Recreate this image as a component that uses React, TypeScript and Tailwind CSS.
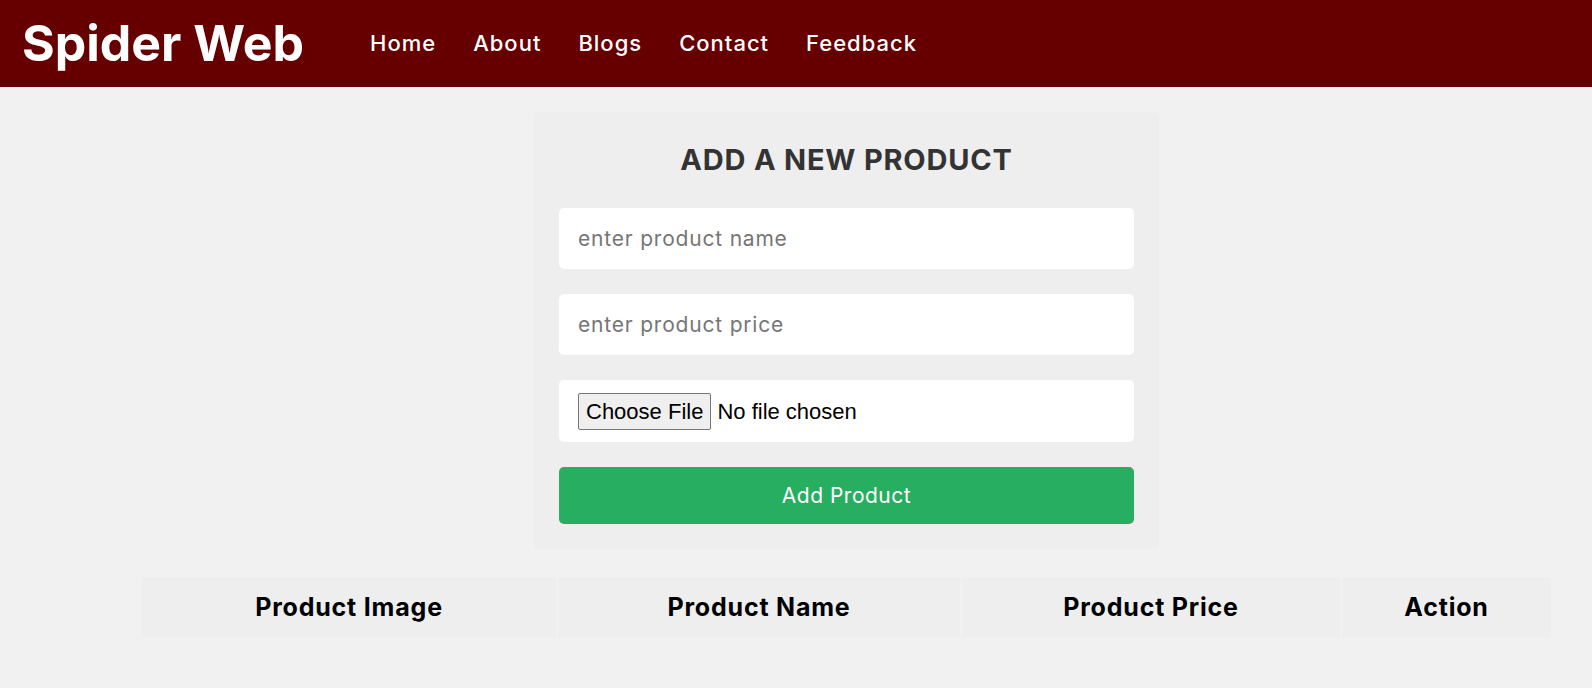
const navLinks = ['Home', 'About', 'Blogs', 'Contact', 'Feedback']

const columns = [
  { label: 'Product Image', width: 'w-[414px]' },
  { label: 'Product Name', width: 'w-[402px]' },
  { label: 'Product Price', width: 'w-[378px]' },
  { label: 'Action', width: 'w-[209px]' },
]

export default function App() {
  return (
    <div className="min-h-[688px] bg-[#f1f1f1] font-['Inter',sans-serif]">
      <header className="flex h-[87px] items-center bg-[#660000] pl-[22px]">
        <a href="#" className="text-[50px] font-bold text-white">
          Spider Web
        </a>
        <nav className="ml-[66px] flex gap-[37px]">
          {navLinks.map((link) => (
            <a key={link} href="#" className="text-[22px] font-medium tracking-[1px] text-white">
              {link}
            </a>
          ))}
        </nav>
      </header>

      {/* add product form */}
      <div className="ml-[534px] mt-[25px] w-[625px] rounded-[5px] bg-[#eeeeee] px-[25px] pb-[25px] pt-[30px]">
        <h3 className="mb-[30px] text-center text-[29px] font-bold uppercase leading-[36px] tracking-[0.8px] text-[#333]">
          Add a new product
        </h3>
        <div className="flex flex-col gap-[25px]">
          <input
            type="text"
            placeholder="enter product name"
            className="h-[61px] rounded-[5px] bg-white px-[19px] text-[21px] tracking-[0.8px] text-[#333] outline-none placeholder:text-[#767676]"
          />
          <input
            type="number"
            placeholder="enter product price"
            className="h-[61px] rounded-[5px] bg-white px-[19px] text-[21px] tracking-[0.8px] text-[#333] outline-none placeholder:text-[#767676]"
          />
          <div className="flex h-[62px] items-center rounded-[5px] bg-white px-[19px]">
            <input
              type="file"
              className="font-['Liberation_Sans',Arial,sans-serif] text-[22px] text-black file:mr-[6px] file:rounded-[2px] file:border file:border-[#767676] file:bg-[#efefef] file:px-[7px] file:py-[1px]"
            />
          </div>
          <button className="h-[57px] rounded-[5px] bg-[#27ae60] text-[21px] tracking-[0.5px] text-white">
            Add Product
          </button>
        </div>
      </div>

      {/* product list */}
      <table className="ml-[140px] mt-[26px] border-separate border-spacing-[2px]">
        <thead>
          <tr>
            {columns.map((col) => (
              <th
                key={col.label}
                className={`${col.width} h-[61px] bg-[#eeeeee] text-center text-[25px] font-bold tracking-[0.8px] text-black`}
              >
                {col.label}
              </th>
            ))}
          </tr>
        </thead>
      </table>
    </div>
  )
}
